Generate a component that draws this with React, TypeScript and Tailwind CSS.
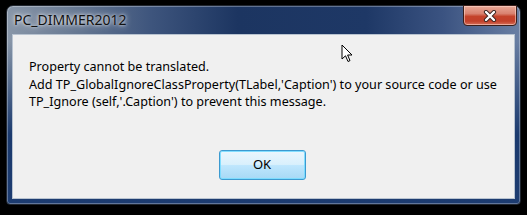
import React from "react";

const font = { fontFamily: '"Noto Sans", "Open Sans", "Liberation Sans", sans-serif' };

function CloseGlyph() {
  return (
    <svg width="14" height="12" viewBox="0 0 14 12">
      <path d="M3 2 L11 10 M11 2 L3 10" stroke="#3a2420" strokeWidth="4.2" strokeLinecap="round" fill="none" />
      <path d="M3 2 L11 10 M11 2 L3 10" stroke="#ffffff" strokeWidth="2.4" strokeLinecap="round" fill="none" />
    </svg>
  );
}

function Cursor() {
  return (
    <svg width="13" height="19" viewBox="0 0 13 19" className="absolute left-[341px] top-[44px]">
      <path
        d="M1 1 L1 15 L4.5 11.8 L7 17.5 L9 16.6 L6.6 11 L11 11 Z"
        fill="#ffffff"
        stroke="#000000"
        strokeWidth="1"
        strokeLinejoin="miter"
      />
    </svg>
  );
}

export default function App() {
  return (
    <div className="relative w-[527px] h-[215px] bg-black overflow-hidden" style={font}>
      <div className="ml-[6px] mt-[5px] w-[515px] h-[200px] rounded-t-[7px] rounded-b-[4px] border border-[#20262f] shadow-[inset_0_0_0_1px_rgba(255,255,255,0.3)] bg-[linear-gradient(to_bottom,rgba(27,58,110,0)_18%,#1b3a6e_65%,#1d3c70_100%),linear-gradient(to_right,#8896a8_0%,#6b7c95_12%,#3e557d_28%,#1c3561_45%,#1e3866_70%,#3b5381_85%,#6a7fa3_100%)] flex flex-col">
        <div className="h-[28px] flex items-start">
          <div className="pl-[7px] pt-[5px] text-[14px] leading-[17px] text-[#111] [text-shadow:0_0_6px_rgba(255,255,255,0.9),0_0_3px_rgba(255,255,255,0.8)]">
            PC_DIMMER2012
          </div>
          <div className="flex-1" />
          <div className="mr-[3px] mt-[-1px] w-[54px] h-[21px] rounded-b-[4px] border border-[#3a1e1a] shadow-[inset_0_0_0_1px_rgba(255,220,210,0.55)] bg-[linear-gradient(to_bottom,#e9a998_0%,#d9826f_40%,#c4432a_55%,#c2402a_80%,#d6705a_100%)] flex items-center justify-center">
            <CloseGlyph />
          </div>
        </div>
        <div className="mx-[5px] h-[165px] border border-[#b8c3d0] bg-[#f0f0f0] flex flex-col">
          <div className="pl-[16px] pt-[23px] text-[12.6px] leading-[17.5px] text-[#000]">
            <div>Property cannot be translated.</div>
            <div>Add TP_GlobalIgnoreClassProperty(TLabel,'Caption') to your source code or use</div>
            <div>TP_Ignore (self,'.Caption') to prevent this message.</div>
          </div>
          <div className="flex justify-center pr-[3px] mt-[39px]">
            <div className="w-[87px] h-[30px] rounded-[3px] border border-[#3c9ad0] shadow-[inset_0_0_0_1px_rgba(120,220,255,0.9)] bg-[linear-gradient(to_bottom,#eaf6fd_0%,#d9f0fc_48%,#bee6fd_52%,#a7d9f5_100%)] flex items-center justify-center text-[13px] text-[#000]">
              OK
            </div>
          </div>
        </div>
      </div>
      <Cursor />
    </div>
  );
}
